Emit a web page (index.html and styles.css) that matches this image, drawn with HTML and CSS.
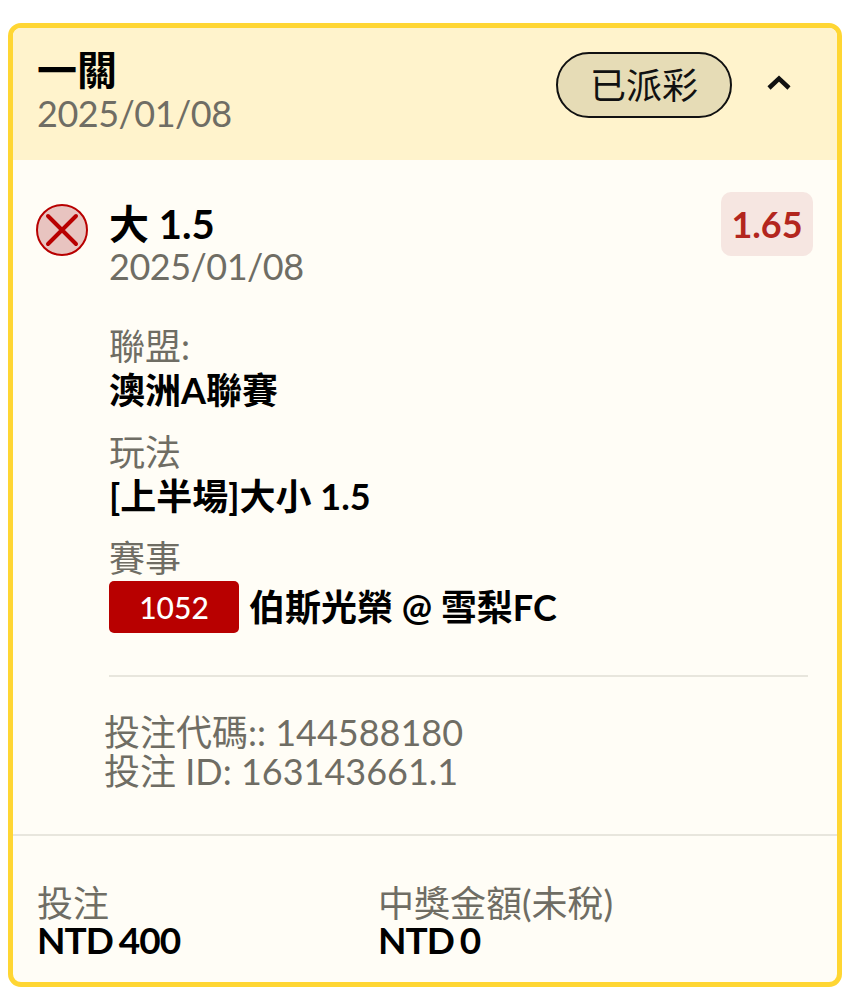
FILE: index.html
```html
<!DOCTYPE html>
<html lang="zh-Hant">

<head>
    <meta charset="UTF-8">
    <meta name="viewport" content="width=device-width, initial-scale=1.0">
    <title>投注紀錄</title>
    <link rel="stylesheet" href="styles.css">
</head>

<body>
    <div class="card">
        <div class="card-header">
            <div class="header-title">
                <div class="strong-text title">一關</div>
                <div class="muted-text date">2025/01/08</div>
            </div>
            <div class="status-pill">已派彩</div>
            <svg class="chevron" viewBox="0 0 26 16" width="26" height="16">
                <path d="M3 14 L13 4.5 L23 14" fill="none" stroke="#111" stroke-width="4.5"/>
            </svg>
        </div>

        <div class="bet-section">
            <div class="bet-top">
                <svg class="lost-icon" viewBox="0 0 52 52" width="52" height="52">
                    <circle cx="26" cy="26" r="25" fill="#e8c4c0" stroke="#b80000" stroke-width="2"/>
                    <path d="M12 12 L40 40 M40 12 L12 40" stroke="#b80000" stroke-width="4" stroke-linecap="round"/>
                </svg>
                <div class="bet-name">
                    <div class="strong-text pick">大 1.5</div>
                    <div class="muted-text date">2025/01/08</div>
                </div>
                <div class="odds">1.65</div>
            </div>

            <div class="bet-details">
                <div class="detail">
                    <div class="muted-text">聯盟:</div>
                    <div class="strong-text">澳洲A聯賽</div>
                </div>
                <div class="detail">
                    <div class="muted-text">玩法</div>
                    <div class="strong-text">[上半場]大小 1.5</div>
                </div>
                <div class="detail">
                    <div class="muted-text">賽事</div>
                    <div class="match-row">
                        <span class="match-no">1052</span>
                        <span class="strong-text">伯斯光榮 @ 雪梨FC</span>
                    </div>
                </div>
            </div>

            <div class="bet-ids muted-text">
                <div>投注代碼:: 144588180</div>
                <div>投注 ID: 163143661.1</div>
            </div>
        </div>

        <div class="card-footer">
            <div class="footer-col first">
                <div class="muted-text">投注</div>
                <div class="strong-text amount">NTD 400</div>
            </div>
            <div class="footer-col">
                <div class="muted-text">中獎金額(未稅)</div>
                <div class="strong-text amount">NTD 0</div>
            </div>
        </div>
    </div>
</body>

</html>
```

FILE: styles.css
```css
body {
    font-family: Lato, "Noto Sans CJK TC", sans-serif;
    background-color: #fff;
    margin: 0;
    padding: 23px 19px 13px 8px;
}

.card {
    border: 5px solid #ffd633;
    border-radius: 13px;
    background-color: #fffdf6;
    overflow: hidden;
}

.muted-text {
    font-size: 36px;
    line-height: 40px;
    color: #6f6d64;
}

.date {
    letter-spacing: -0.5px;
}

.strong-text {
    font-size: 36px;
    line-height: 48px;
    font-weight: 700;
    color: #000;
}

.card-header {
    display: flex;
    align-items: flex-start;
    height: 132px;
    padding: 0 45px 0 24px;
    box-sizing: border-box;
    background-color: #fff3cc;
}

.header-title {
    flex: 1;
    padding-top: 19px;
}

.title {
    font-size: 40px;
    line-height: 46px;
}

.status-pill {
    width: 172px;
    height: 62px;
    margin: 24px 34px 0 0;
    border: 2px solid #111;
    border-radius: 33px;
    background-color: #e6dcb6;
    font-size: 36px;
    line-height: 62px;
    text-align: center;
    color: #111;
}

.chevron {
    margin-top: 46px;
}

.bet-section {
    padding: 32px 24px 0;
}

.bet-top {
    display: flex;
    align-items: flex-start;
}

.lost-icon {
    margin: 12px 21px 0 -1px;
}

.bet-name {
    flex: 1;
    padding-top: 11px;
}

.pick {
    font-size: 40px;
    line-height: 43px;
}

.odds {
    width: 92px;
    height: 64px;
    border-radius: 10px;
    background-color: #f6e6e1;
    font-size: 36px;
    font-weight: 700;
    line-height: 64px;
    text-align: center;
    color: #b3261e;
}

.bet-details {
    margin: 40px 5px 0 72px;
    padding-bottom: 42px;
    border-bottom: 2px solid #e8e6dd;
}

.detail {
    margin-bottom: 18px;
}

.detail:last-child {
    margin-bottom: 0;
}

.match-row {
    display: flex;
    align-items: center;
    gap: 10px;
    margin-top: 3px;
}

.match-no {
    width: 130px;
    height: 52px;
    border-radius: 5px;
    background-color: #b80000;
    font-size: 30px;
    font-weight: 500;
    line-height: 52px;
    text-align: center;
    color: #fff;
}

.bet-ids {
    margin: 36px 0 0 67px;
    padding-bottom: 43px;
    line-height: 39px;
}

.card-footer {
    display: flex;
    padding: 47px 24px 25px;
    border-top: 2px solid #e8e6dd;
}

.amount {
    font-size: 37px;
    line-height: 34px;
    letter-spacing: -1px;
    word-spacing: -2px;
}

.footer-col.first {
    width: 341px;
}
```
